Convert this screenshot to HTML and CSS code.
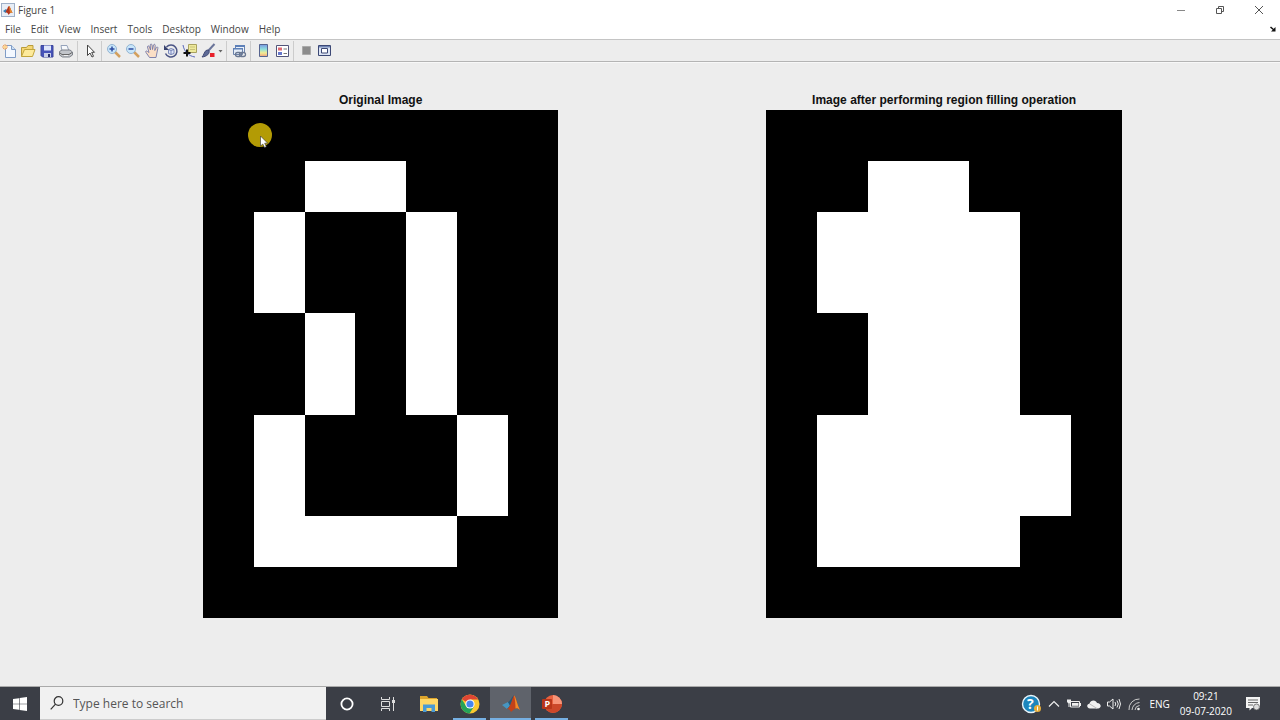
FILE: index.html
```html
<!DOCTYPE html>
<html lang="en">
<head>
    <meta charset="UTF-8">
    <meta name="viewport" content="width=device-width, initial-scale=1.0">
    <title>Figure 1</title>
    <link rel="stylesheet" href="styles.css">
</head>
<body>
    <header class="titlebar">
        <svg class="app-icon" viewBox="0 0 14 14">
            <rect x=".5" y=".5" width="13" height="13" fill="#e8eef6" stroke="#9fb0c8"/>
            <path d="M2 8l3-2 1.500 1.500L4.500 10z" fill="#3c7fb5"/>
            <path d="M5 8c1-1 2-5 3-5s2 5 4 7c-2-1-3 0-4.500 2C7 10 6 9.500 4.500 9.500z" fill="#b5371d"/>
            <path d="M8 3c1 0 2 5 4 7-2-1-2.500-.5-3 0z" fill="#e58a2b"/>
        </svg>
        <span class="caption">Figure 1</span>
        <div class="window-buttons">
            <button aria-label="Minimize"><svg viewBox="0 0 10 10"><path d="M1 5.500h8" stroke="#888"/></svg></button>
            <button aria-label="Restore"><svg viewBox="0 0 10 10"><path d="M1.500 3.500h5v5h-5zM3.500 3V1.500h5v5H7" fill="none" stroke="#555"/></svg></button>
            <button aria-label="Close"><svg viewBox="0 0 10 10"><path d="M1 1l8 8M9 1L1 9" stroke="#555"/></svg></button>
        </div>
    </header>

    <nav class="menubar">
        <button>File</button>
        <button>Edit</button>
        <button>View</button>
        <button>Insert</button>
        <button>Tools</button>
        <button>Desktop</button>
        <button>Window</button>
        <button>Help</button>
        <button class="dock" aria-label="Dock figure"><svg viewBox="0 0 6 6"><path d="M.5 1l3.500 3" stroke="#111" stroke-width="1.500"/><path d="M5.500 1v4.500H1z" fill="#111"/></svg></button>
    </nav>

    <div class="toolbar">
        <button aria-label="New figure"><svg viewBox="0 0 16 16">
            <path d="M4.500 2.500h6l4 4v8h-10z" fill="#f3f8ff" stroke="#7f9cc6"/>
            <path d="M10.500 2.500v4h4" fill="#cfdff2" stroke="#7f9cc6"/>
            <path d="M4 1v6M1 4h6M2 2l4 4M6 2L2 6" stroke="#f2a566"/>
            <circle cx="4" cy="4" r="1.500" fill="#ffd98a"/>
        </svg></button>
        <button aria-label="Open file"><svg viewBox="0 0 16 16">
            <path d="M1.500 13.500v-9h5l1.500-2h5v4" fill="#f5d673" stroke="#b99c3a"/>
            <path d="M1.500 13.500l3-7h10.500l-2.500 7z" fill="#fdea9b" stroke="#c2a53c"/>
        </svg></button>
        <button aria-label="Save figure"><svg viewBox="0 0 16 16">
            <path d="M2 2.500h12v11.500H3.500L2 12.500z" fill="#4652b8" stroke="#3d479c"/>
            <path d="M5 2.500h7v5H5z" fill="#dfe6fb"/>
            <path d="M5 10h7v4H5z" fill="#c9cfe8"/>
            <path d="M9 11h2v3H9z" fill="#27306f"/>
        </svg></button>
        <button aria-label="Print figure"><svg viewBox="0 0 16 16">
            <path d="M4 8l-1-5.500h6l2 5.500z" fill="#f7f9fc" stroke="#95a3bb"/>
            <path d="M1.500 8.500l2.500-1.500h8l2.500 2v3l-3 2h-7l-3-2z" fill="#c2c5ca" stroke="#7d8189"/>
            <path d="M2 10l2 1.500h7l3-2" fill="none" stroke="#666"/>
            <path d="M6 12.500h4" stroke="#f0f0f0"/>
        </svg></button>
        <span class="sep"></span>
        <button aria-label="Edit plot"><svg viewBox="0 0 16 16">
            <path d="M5.500 2v10.500l2.500-2.500 2 4 1.500-.7-1.800-4H12.500z" fill="#fff" stroke="#444"/>
        </svg></button>
        <span class="sep"></span>
        <button aria-label="Zoom in"><svg viewBox="0 0 16 16">
            <path d="M9 9l5 5" stroke="#d3a05e" stroke-width="2.500"/>
            <circle cx="6" cy="6" r="4.500" fill="#c9e6fa" stroke="#93b4d2"/>
            <path d="M3.500 6h5M6 3.500v5" stroke="#2d4ba0" stroke-width="1.500"/>
        </svg></button>
        <button aria-label="Zoom out"><svg viewBox="0 0 16 16">
            <path d="M9 9l5 5" stroke="#d3a05e" stroke-width="2.500"/>
            <circle cx="6" cy="6" r="4.500" fill="#c9e6fa" stroke="#93b4d2"/>
            <path d="M3.500 6h5" stroke="#2d4ba0" stroke-width="1.500"/>
        </svg></button>
        <button aria-label="Pan"><svg viewBox="0 0 16 16">
            <path d="M5.500 14.500L2 9.500c-1-1.500.5-2 1.500-1L5 9.500 3.500 4c0-1.500 1.500-1.500 2 0L6.500 7l-.3-5c.2-1.300 1.600-1.300 1.800 0l.5 4.500L9.500 2c.5-1.200 1.800-.8 1.700.5L10.800 7.500l1.500-3c.8-1 2-.4 1.500 1L12 14.500z" fill="#fbdfc6" stroke="#7478a8" stroke-width=".9"/>
        </svg></button>
        <button aria-label="Rotate 3D"><svg viewBox="0 0 16 16">
            <path d="M3.500 4a6 6 0 1 1-1 6.500" fill="none" stroke="#4a5485" stroke-width="1.500"/>
            <path d="M1 2v5h5z" fill="#39436f"/>
            <path d="M5.500 6.500l2.500-1 3 1v4l-3 1-2.500-1zM8 7.500v4M5.500 6.500l2.500 1 3-1" fill="#dce4f8" stroke="#6272ac" stroke-width=".8"/>
        </svg></button>
        <button aria-label="Data cursor"><svg viewBox="0 0 16 16">
            <path d="M6.500 1.500h8v8h-8z" fill="#eeea9c" stroke="#a9a260"/>
            <path d="M8 4h5M8 6.500h5" stroke="#c9c27a"/>
            <path d="M1 2c1 6 5 11 12 12" fill="none" stroke="#5a68bb"/>
            <path d="M5 6.500v7M1.500 10h7" stroke="#111" stroke-width="2"/>
        </svg></button>
        <button aria-label="Brush data"><svg viewBox="0 0 16 16">
            <path d="M13.500 1L7 8" stroke="#6a7499" stroke-width="2"/>
            <path d="M8 7.500c1 3-2 6-7 6.500 2-1.500 2-6 5-7z" fill="#5e6b97" stroke="#434c77"/>
            <path d="M9 10h4.500v4H9z" fill="#e8212b"/>
        </svg></button>
        <button class="caret" aria-label="Brush colors"><svg viewBox="0 0 5 16"><path d="M.5 7h4L2.500 9.500z" fill="#666"/></svg></button>
        <span class="sep"></span>
        <button aria-label="Link plot"><svg viewBox="0 0 16 16">
            <path d="M4.500 2.500h9v7h-9z" fill="#eaf1fa" stroke="#6b82ab"/>
            <path d="M4 2h10v2H4z" fill="#5d80b8"/>
            <path d="M2.500 5.500h9v6h-9z" fill="#e4edf8" stroke="#6b82ab"/>
            <path d="M2 5h10v1.500H2z" fill="#5d80b8"/>
            <rect x="4.500" y="9.500" width="6" height="4" rx="2" fill="none" stroke="#6a7892" stroke-width="1.300"/>
            <rect x="8.500" y="9.500" width="6" height="4" rx="2" fill="none" stroke="#6a7892" stroke-width="1.300"/>
        </svg></button>
        <span class="sep"></span>
        <button aria-label="Insert colorbar"><svg viewBox="0 0 16 16">
            <defs><linearGradient id="bar" x1="0" y1="0" x2="0" y2="1">
                <stop offset="0" stop-color="#7897e2"/><stop offset=".4" stop-color="#8ee0dd"/>
                <stop offset=".7" stop-color="#f3ec92"/><stop offset="1" stop-color="#f0a080"/>
            </linearGradient></defs>
            <path d="M4.500 1.500h8v12h-8z" fill="url(#bar)" stroke="#56648f"/>
        </svg></button>
        <button aria-label="Insert legend"><svg viewBox="0 0 16 16">
            <path d="M2.500 2.500h12v11h-12z" fill="#fff" stroke="#52557a"/>
            <path d="M4 4.500h4v3H4z" fill="#df6970"/>
            <path d="M4 9h4v3H4z" fill="#6577cb"/>
            <path d="M9.500 6h3.500M9.500 10.500h3.500" stroke="#777"/>
        </svg></button>
        <span class="sep"></span>
        <button aria-label="Hide plot tools"><svg viewBox="0 0 16 16"><path d="M4.500 3.500h8v8h-8z" fill="#8c8c8c" stroke="#aaa"/></svg></button>
        <button aria-label="Show plot tools"><svg viewBox="0 0 16 16">
            <path d="M1.500 2.500h12v10h-12z" fill="#dde5f4" stroke="#3c4875"/>
            <path d="M2 3h11v1.500H2z" fill="#6f84b5"/>
            <path d="M4.500 5.500h6v4.500h-6z" fill="#fff" stroke="#3c4875"/>
        </svg></button>
    </div>

    <main class="figure">
        <section class="subplot">
            <h2>Original Image</h2>
            <div class="axes">
                <svg viewBox="0 0 7 10" shape-rendering="crispEdges">
                    <rect width="7" height="10"/>
                    <path d="M2 1h2v1H2zM1 2h1v2H1zM4 2h1v4H4zM2 4h1v2H2zM1 6h1v2h3v1H1zM5 6h1v2H5z" fill="#fff"/>
                </svg>
                <svg class="pointer" viewBox="0 0 24 24">
                    <circle cx="12" cy="12" r="12" fill="#b39b05"/>
                    <path d="M12.500 13v10l2.300-2 1.700 3.500 1.800-.8-1.600-3.500h3z" fill="#fff" stroke="#333" stroke-width=".6"/>
                </svg>
            </div>
        </section>
        <section class="subplot">
            <h2>Image after performing region filling operation</h2>
            <div class="axes">
                <svg viewBox="0 0 7 10" shape-rendering="crispEdges">
                    <rect width="7" height="10"/>
                    <path d="M2 1h2v1h1v4h1v2H5v1H1V6h1V4H1V2h1z" fill="#fff"/>
                </svg>
            </div>
        </section>
    </main>

    <footer class="taskbar">
        <button class="start" aria-label="Start"><svg viewBox="0 0 14 14"><path d="M0 2l6-.8v5.500H0zM6.600 1.100L14 0v6.700H6.600zM0 7.300h6v5.500L0 12zM6.600 7.300H14V14l-7.400-1.100z" fill="#fff"/></svg></button>
        <label class="search">
            <svg viewBox="0 0 14 14"><circle cx="8.500" cy="5" r="4.300" fill="none" stroke="#333" stroke-width="1.200"/><path d="M5.500 8.200L.7 13.300" stroke="#333" stroke-width="1.200"/></svg>
            <input type="text" placeholder="Type here to search" aria-label="Search">
        </label>
        <button class="task" aria-label="Cortana"><svg viewBox="0 0 20 20"><circle cx="10" cy="10" r="5.600" fill="none" stroke="#fff" stroke-width="1.800"/></svg></button>
        <button class="task" aria-label="Task view"><svg viewBox="0 0 20 20"><path d="M3.500 3v2.500h8V3M3.500 17v-2.500h8V17M3.500 7.500h8v5h-8zM15.500 3v14" fill="none" stroke="#ddd"/><path d="M14 6h3v3h-3z" fill="#ddd"/></svg></button>
        <button class="task" aria-label="File Explorer"><svg viewBox="0 0 20 20">
            <path d="M1 2h7l1.500 2H18v3H1z" fill="#dda52c"/>
            <path d="M1 5h18v12H1z" fill="#ffd766"/>
            <path d="M4 18v-7.500h12V18h-3.500v-4h-5v4z" fill="#4a9ad4"/>
        </svg></button>
        <button class="task open" aria-label="Chrome"><svg viewBox="0 0 20 20">
            <circle cx="10" cy="10" r="9.500" fill="#fbc92f"/>
            <path d="M10 10L1.800 5.200A9.500 9.500 0 0 1 18.200 5.500H10z" fill="#df4634"/>
            <path d="M1.800 5.200A9.500 9.500 0 0 0 9.500 19.500L14 12.500 10 10 6 12z" fill="#25a35a"/>
            <circle cx="10" cy="10" r="4.600" fill="#fff"/>
            <circle cx="10" cy="10" r="3.600" fill="#4686ee"/>
        </svg></button>
        <button class="task open active" aria-label="MATLAB"><svg viewBox="0 0 20 20">
            <path d="M1 11l6-3 3 3-4 4z" fill="#4795c0"/>
            <path d="M7 8c3-1 4-6.500 6-6.500L9 14l-3 1 3-3z" fill="#245a7b"/>
            <path d="M13 1.500c1.500 0 3 9 6 14.500-3-3-5-2-9 2-1-2-2-3-4-3C10 13 11 4 13 1.500z" fill="#c34219"/>
            <path d="M13 1.500c1.500 0 3 9 6 14.500-2-2-3-2-4.500-1.500C14.500 10 14 5 13 1.500z" fill="#f28c28"/>
        </svg></button>
        <button class="task open" aria-label="PowerPoint"><svg viewBox="0 0 20 20">
            <circle cx="11" cy="10" r="9" fill="#e8613f"/>
            <path d="M11 1a9 9 0 0 1 9 9h-9z" fill="#f79478"/>
            <path d="M2.600 13A9 9 0 0 0 20 10h-9z" fill="#cc4729"/>
            <rect y="5" width="10" height="10" rx="1" fill="#b93519"/>
            <text class="ppt" x="2.500" y="13">P</text>
        </svg></button>

        <div class="tray">
            <button class="help" aria-label="Get help"><svg viewBox="0 0 20 20">
                <circle cx="10" cy="10" r="8.500" fill="#1c86bd" stroke="#e9f5fb" stroke-width="1.400"/>
                <text class="mark" x="6" y="15">?</text>
                <circle cx="16.500" cy="14.500" r="3.500" fill="#e8ae3a"/><path d="M16.500 12.500v4" stroke="#fff"/>
            </svg></button>
            <button aria-label="Show hidden icons"><svg viewBox="0 0 14 14"><path d="M2 9.500l5-5 5 5" fill="none" stroke="#eee" stroke-width="1.200"/></svg></button>
            <button aria-label="Battery"><svg viewBox="0 0 14 14"><path d="M3.500 4.500h9v5.500h-9z" fill="none" stroke="#eee"/><path d="M13 6h1v3h-1zM0 2.500h4V5L2.500 6.500V10H1.500V6.500L0 5z" fill="#eee"/><path d="M5 6h6.500v2.800H5z" fill="#eee"/></svg></button>
            <button aria-label="OneDrive"><svg viewBox="0 0 14 14"><path d="M3 11.500C-.8 11-.5 7 2.500 6.800 3.500 2.500 9 2.500 10 6c4.500.2 5 5.200 1 5.500z" fill="#f0f0f0"/><path d="M2.500 6.800L10 11.500" stroke="#bbb"/></svg></button>
            <button aria-label="Volume"><svg viewBox="0 0 14 14"><path d="M.5 5h2L6 2v10L2.500 9h-2zM8 5q1.500 2 0 4M10 3.500q2.500 3.500 0 7M12 2q3 5 0 10" fill="none" stroke="#eee"/></svg></button>
            <button aria-label="Network"><svg viewBox="0 0 14 14"><path d="M2 13A10 10 0 0 1 12.500 2M5 13A8 8 0 0 1 12.500 5.500M8 13a5 5 0 0 1 4.500-4.500" fill="none" stroke="#ccc"/><circle cx="11.500" cy="12" r="1.300" fill="#eee"/></svg></button>
            <button class="lang">ENG</button>
            <button class="clock"><span>09:21</span><span>09-07-2020</span></button>
            <button class="notes" aria-label="Notifications"><svg viewBox="0 0 14 14"><path d="M0 0h14v11H6l-2.500 2.500V11H0z" fill="#f4f4f4"/><path d="M2 3h10M2 5.500h10M2 8h5" stroke="#666"/><circle cx="10.500" cy="10" r="3" fill="#ddd" stroke="#555" stroke-width=".7"/></svg></button>
        </div>
    </footer>
</body>
</html>
```

FILE: styles.css
```css
* {
    box-sizing: border-box;
}
body {
    display: flex;
    flex-direction: column;
    height: 100vh;
    margin: 0;
    background-color: #ededed;
    color: #444;
    font-family: "Open Sans", "Noto Sans", sans-serif;
    font-size: 10px;
}
button {
    display: flex;
    align-items: center;
    justify-content: center;
    margin: 0;
    padding: 0;
    border: none;
    background: none;
    color: inherit;
    font: inherit;
}
svg {
    display: block;
}
.titlebar {
    display: flex;
    align-items: center;
    height: 19px;
    padding-right: 2px;
    background-color: #fff;
}
.app-icon {
    width: 14px;
    height: 14px;
    margin: 0 3px 0 1px;
}
.window-buttons {
    display: flex;
    margin-left: auto;
}
.window-buttons button {
    width: 39px;
    height: 19px;
}
.window-buttons svg {
    width: 10px;
    height: 10px;
}
.menubar {
    display: flex;
    align-items: center;
    gap: 10px;
    height: 20px;
    padding: 0 4px 0 5px;
    background-color: #fff;
}
.dock {
    margin-left: auto;
}
.dock svg {
    width: 6px;
    height: 6px;
}
.toolbar {
    display: flex;
    align-items: center;
    gap: 3px;
    height: 23px;
    padding: 0 1px;
    border-top: 1px solid #c4c4c4;
    border-bottom: 1px solid #b4b4b4;
}
.toolbar svg {
    width: 16px;
    height: 16px;
}
.toolbar .caret {
    margin-left: -2px;
}
.toolbar .caret svg {
    width: 5px;
}
.sep {
    width: 2px;
    height: 20px;
    border-left: 1px solid #ccc;
}

/* two subplots, axes positions as fractions of the figure */
.figure {
    flex: 1;
    display: grid;
    grid-template-columns: 1fr 1fr;
    column-gap: 13.6%;
    min-height: 0;
    padding: 29px 9.5% 68px 13%;
    border-top: 1px solid #f8f8f8;
}
.subplot {
    display: flex;
    flex-direction: column;
    align-items: center;
    min-height: 0;
}
.subplot h2 {
    margin: 0;
    padding-bottom: 2px;
    color: #111;
    font-family: "Liberation Sans", Arial, sans-serif;
    font-size: 12px;
    line-height: 16px;
    white-space: nowrap;
}
.axes {
    position: relative;
    flex: 1;
    min-height: 0;
    aspect-ratio: 7 / 10;
}
.axes svg {
    width: 100%;
    height: 100%;
}
.axes .pointer {
    position: absolute;
    left: 45px;
    top: 13px;
    width: 24px;
    height: 24px;
    overflow: visible;
}

.taskbar {
    display: flex;
    height: 34px;
    border-top: 1px solid #aaa;
    background-color: #3b3e46;
    color: #fff;
}
.start {
    width: 40px;
}
.start svg {
    width: 14px;
    height: 14px;
}
.search {
    display: flex;
    align-items: center;
    gap: 9px;
    width: 286px;
    padding-left: 10px;
    border-bottom: 1px solid #ccc;
    background-color: #f1f1f1;
}
.search svg {
    width: 14px;
    height: 14px;
}
.search input {
    flex: 1;
    min-width: 0;
    padding: 0;
    border: none;
    outline: none;
    background: none;
    font: inherit;
    font-size: 12px;
}
.search input::placeholder {
    color: #555;
}
.task {
    position: relative;
    width: 41px;
}
.task svg {
    width: 20px;
    height: 20px;
}
.task.active {
    background-color: #5f636b;
}
.task.open::after {
    content: "";
    position: absolute;
    left: 4px;
    right: 4px;
    bottom: 0;
    height: 2px;
    background-color: #76b0e3;
}
.task.active::after {
    left: 0;
    right: 0;
}
.ppt {
    fill: #fff;
    font-size: 9px;
    font-weight: bold;
}
.mark {
    fill: #fff;
    font-size: 14px;
    font-weight: bold;
}
.tray {
    display: flex;
    align-items: center;
    gap: 6px;
    margin-left: auto;
    padding-right: 20px;
}
.tray svg {
    width: 14px;
    height: 14px;
}
.tray .help svg {
    width: 20px;
    height: 20px;
}
.lang {
    margin-left: 2px;
}
.clock {
    flex-direction: column;
    margin: 0 8px 0 4px;
    line-height: 15px;
}
```
